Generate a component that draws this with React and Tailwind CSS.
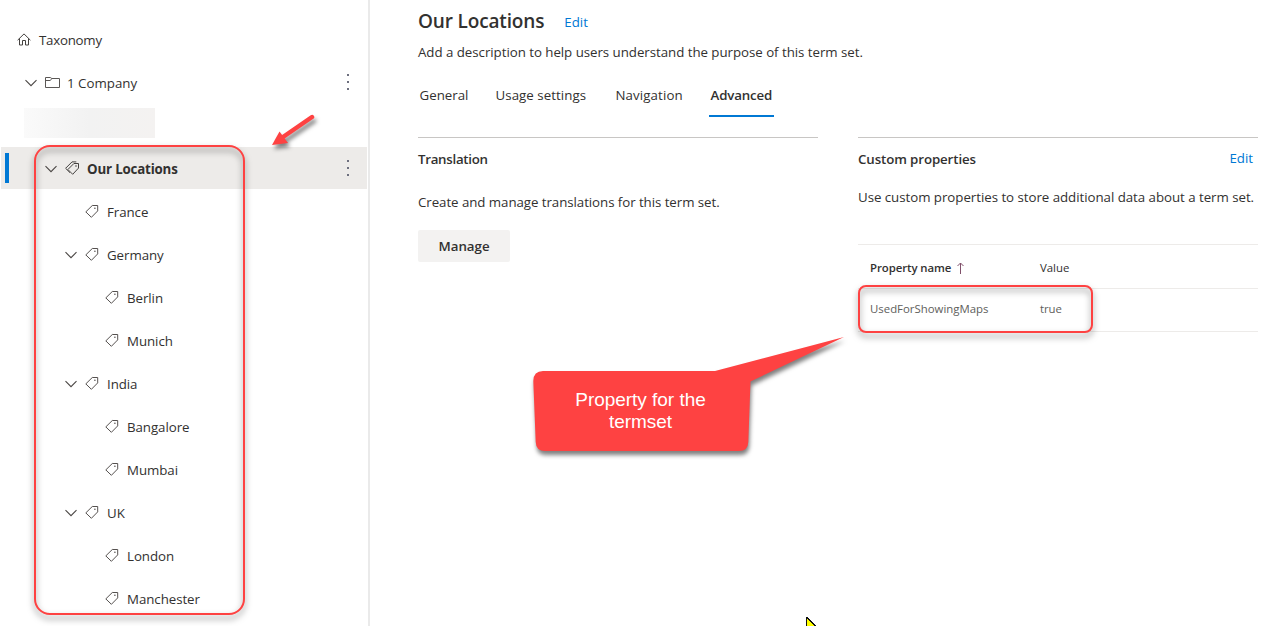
const tree = [
  { label: "France", level: 1 },
  { label: "Germany", level: 1, open: true },
  { label: "Berlin", level: 2 },
  { label: "Munich", level: 2 },
  { label: "India", level: 1, open: true },
  { label: "Bangalore", level: 2 },
  { label: "Mumbai", level: 2 },
  { label: "UK", level: 1, open: true },
  { label: "London", level: 2 },
  { label: "Manchester", level: 2 },
];

function Chevron() {
  return (
    <svg className="h-3 w-3 shrink-0" viewBox="0 0 12 12" fill="none" stroke="#4a4644" strokeWidth="1.1">
      <path d="M0.5 4.2L6 9.7L11.5 4.2" />
    </svg>
  );
}

function HomeIcon() {
  return (
    <svg className="h-[14px] w-[14px] shrink-0" viewBox="0 0 14 14" fill="none" stroke="#454240" strokeWidth="1">
      <path d="M0.6 8.2L7 1.9L13.4 8.2" />
      <path d="M2.5 6.5V13H5.5V8.5H8.5V13H11.5V6.5" />
    </svg>
  );
}

function FolderIcon() {
  return (
    <svg className="h-[14px] w-[15px] shrink-0" viewBox="0 0 15 14" fill="none" stroke="#5a5755" strokeWidth="1">
      <path d="M0.5 12.5V2.5H5.3L6.8 3.5H14.5V12.5H0.5Z" />
      <path d="M0.5 5.5H5.3L6.8 3.5" />
    </svg>
  );
}

function TagIcon() {
  return (
    <svg className="h-[14px] w-[14px] shrink-0" viewBox="0 0 14 14" fill="none" stroke="#55514f" strokeWidth="1">
      <path d="M7.3 1.5H12.7V6.9L6.4 13.3L0.8 7.9L7.3 1.5Z" />
      <circle cx="9.9" cy="4.3" r="0.8" fill="#55514f" stroke="none" />
    </svg>
  );
}

function TagsIcon() {
  return (
    <svg className="h-[14px] w-[15px] shrink-0" viewBox="0 0 15 14" fill="none" stroke="#454240" strokeWidth="1">
      <path d="M8.9 2.5H13.5V7.1L7.7 13.3L2.9 8.5L8.9 2.5Z" />
      <path d="M11.3 0.9H7L0.6 7.3L5 11.7" />
      <circle cx="11" cy="5" r="0.8" fill="#454240" stroke="none" />
    </svg>
  );
}

function More() {
  return (
    <div className="ml-auto mr-[18px] flex flex-col gap-[5px]">
      <i className="h-[2px] w-[2px] bg-[#6d6f7e]" />
      <i className="h-[2px] w-[2px] bg-[#6d6f7e]" />
      <i className="h-[2px] w-[2px] bg-[#6d6f7e]" />
    </div>
  );
}

function Sidebar() {
  return (
    <aside className="flex h-full w-[370px] shrink-0 flex-col border-r-2 border-[#eaeaea] pr-px pl-px pt-[18px] tracking-[-0.06px]">
      <div className="mb-px flex h-[42px] items-center pl-4">
        <HomeIcon />
        <span className="ml-2 pt-[2px] tracking-[-0.25px]">Taxonomy</span>
      </div>
      <div className="mb-px flex h-[42px] items-center pl-6">
        <Chevron />
        <span className="ml-2 flex"><FolderIcon /></span>
        <span className="ml-[7px] pt-[2px] tracking-normal">1 Company</span>
        <More />
      </div>
      <div className="mb-px flex h-[42px] items-start pl-[23px] pt-1">
        <div className="h-[30px] w-[131px] bg-linear-to-r from-[#fafafa] via-[#f2f2f2] to-[#f4f2f1]" />
      </div>
      <div className="mb-px flex h-[42px] shrink-0 items-center bg-[#edebe9] pl-1">
        <div className="h-[30px] w-1 bg-[#0078d4]" />
        <span className="ml-9 flex"><Chevron /></span>
        <span className="ml-2 flex"><TagsIcon /></span>
        <span className="ml-[7px] pt-[2px] font-bold tracking-[-0.17px]">Our Locations</span>
        <More />
      </div>
      {tree.map((t) => (
        <div
          key={t.label}
          className={
            "mb-px flex h-[42px] shrink-0 items-center " +
            (t.open ? "pl-16" : t.level === 1 ? "pl-[84px]" : "pl-[104px]")
          }
        >
          {t.open && <span className="mr-2 flex"><Chevron /></span>}
          <TagIcon />
          <span className="ml-2 pt-[2px]">{t.label}</span>
        </div>
      ))}
    </aside>
  );
}

function Main() {
  return (
    <main className="ml-12 flex w-[840px] flex-col">
      <div className="mt-[7px] flex h-7 items-center">
        <h1 className="text-[19px] font-semibold tracking-[-0.15px]">Our Locations</h1>
        <a className="ml-5 pt-[2px] text-[#0078d4]">Edit</a>
      </div>
      <p className="mt-[7px] h-5 leading-5 tracking-[-0.04px]">Add a description to help users understand the purpose of this term set.</p>
      <nav className="mt-[11px] flex h-11 items-center">
        <span className="ml-[1.5px] w-[76px]">General</span>
        <span className="w-[120px] tracking-[0.05px]">Usage settings</span>
        <span className="w-[93.5px] tracking-[0.1px]">Navigation</span>
        <span className="flex h-11 items-center border-b-2 border-[#0078d4] pt-[2px] pl-[1.5px] pr-[2px] font-semibold tracking-[-0.15px]">Advanced</span>
      </nav>
      <div className="mt-5 flex gap-10">
        <section className="w-[400px] border-t border-[#c8c6c4]">
          <h2 className="mt-[11px] h-5 leading-5 font-semibold tracking-[-0.28px]">Translation</h2>
          <p className="mt-[23px] h-5 leading-5 tracking-[-0.06px]">Create and manage translations for this term set.</p>
          <button className="mt-[18px] flex h-8 w-[92px] items-center justify-center rounded-[2px] bg-[#f3f2f1] font-semibold">Manage</button>
        </section>
        <section className="w-[400px] border-t border-[#c8c6c4]">
          <div className="mt-[11px] flex h-5 justify-between pr-[5px] leading-5">
            <h2 className="font-semibold tracking-[-0.11px]">Custom properties</h2>
            <a className="-mt-px text-[#0078d4]">Edit</a>
          </div>
          <p className="mt-[18px] h-5 leading-5 tracking-[-0.04px] whitespace-nowrap">Use custom properties to store additional data about a term set.</p>
          <div className="mt-[37px] border-t border-[#edebe9] text-[11.4px]">
            <div className="flex h-11 items-center border-b border-[#edebe9] pl-3 pt-[3px]">
              <div className="flex w-[170px] items-center font-semibold tracking-[-0.08px]">
                Property name
                <svg className="ml-[6px] h-3 w-[7px]" viewBox="0 0 7 12" fill="none" stroke="#80506a" strokeWidth="1">
                  <path d="M3.5 12V1M0.5 4L3.5 1L6.5 4" />
                </svg>
              </div>
              <span>Value</span>
            </div>
            <div className="flex h-[43px] items-center border-b border-[#edebe9] pb-[2px] pl-3 text-[#605e5c]">
              <span className="w-[170px]">UsedForShowingMaps</span>
              <span className="tracking-[-0.1px]">true</span>
            </div>
          </div>
        </section>
      </div>
    </main>
  );
}

function Annotations() {
  return (
    <div className="pointer-events-none absolute inset-0">
      <div className="absolute left-[34px] top-[145px] h-[470px] w-[211px] rounded-[16px] border-2 border-[#fe4242] drop-shadow-[0_4px_3px_rgba(0,0,0,0.5)]" />
      <div className="absolute left-[858px] top-[285px] h-[48px] w-[235px] rounded-[8px] border-2 border-[#fe4242] drop-shadow-[0_4px_3px_rgba(0,0,0,0.5)]" />
      <svg className="absolute left-[262px] top-[105px] h-[50px] w-[64px] drop-shadow-[2px_4px_2px_rgba(0,0,0,0.5)]" viewBox="262 105 64 50">
        <path d="M312 117L283 137" stroke="#fe4242" strokeWidth="4.5" strokeLinecap="round" />
        <path d="M272 145L279.5 131.5L288 143Z" fill="#fe4242" />
      </svg>
      <svg className="absolute left-[520px] top-[325px] h-[145px] w-[335px] drop-shadow-[1px_4px_2px_rgba(0,0,0,0.5)]" viewBox="520 325 335 145">
        <path fill="#fe4242" d="M543 371H715L844 337L750.5 381.5L748.3 442Q748 451 739 451H545Q536 451 535.7 442L533.3 381Q533.5 371 543 371Z" />
      </svg>
      <div className="absolute left-[541px] top-[389px] w-[199px] text-center font-['Liberation_Sans',sans-serif] text-[19px] leading-[22px] tracking-[-0.03px] text-white">
        Property for the
        <br />
        termset
      </div>
      <svg className="absolute left-[806px] top-[617px] h-[9px] w-[11px]" viewBox="0 0 11 9" shapeRendering="crispEdges">
        <path d="M0.5 0V12L10 9.5Z" fill="#ffff00" stroke="#111" />
      </svg>
    </div>
  );
}

export default function App() {
  return (
    <div className="relative flex h-[626px] w-[1281px] overflow-hidden bg-white font-['Open_Sans','Noto_Sans',sans-serif] text-[13.3px] leading-5 text-[#323130]">
      <Sidebar />
      <Main />
      <Annotations />
    </div>
  );
}
